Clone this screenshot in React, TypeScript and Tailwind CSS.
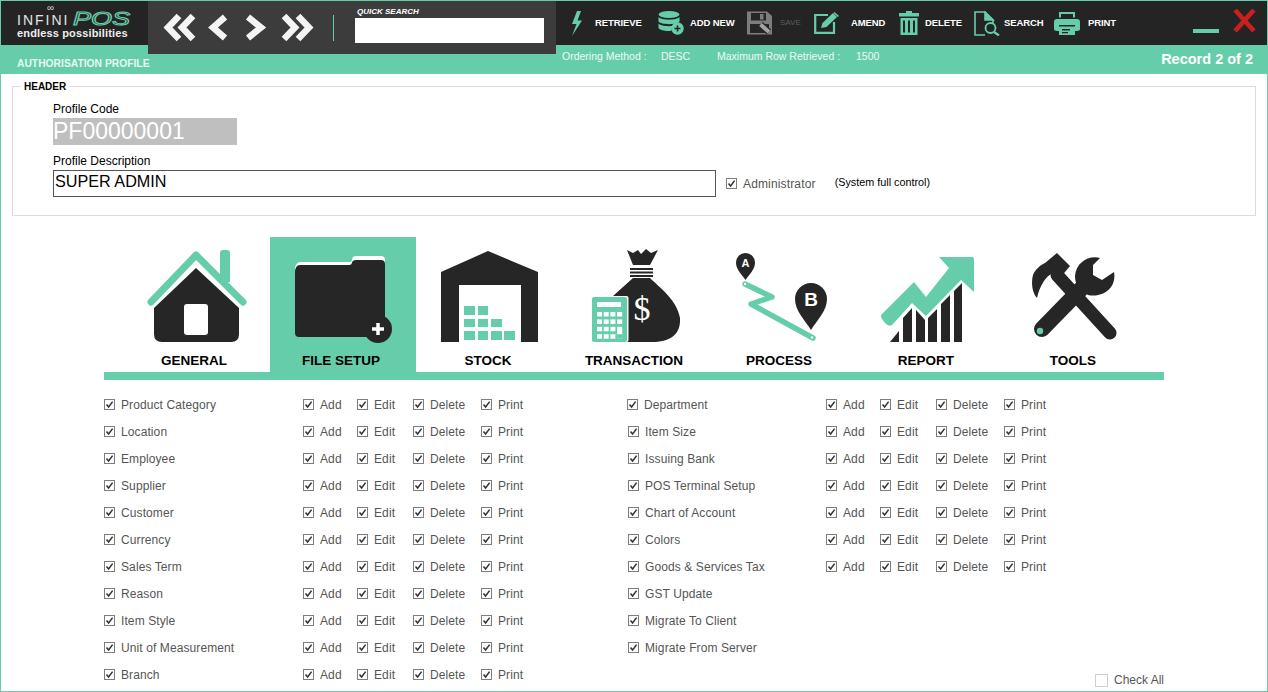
import type { ReactNode } from 'react'

const left = ['Product Category', 'Location', 'Employee', 'Supplier', 'Customer', 'Currency', 'Sales Term', 'Reason', 'Item Style', 'Unit of Measurement', 'Branch']
const right = ['Department', 'Item Size', 'Issuing Bank', 'POS Terminal Setup', 'Chart of Account', 'Colors', 'Goods & Services Tax', 'GST Update', 'Migrate To Client', 'Migrate From Server']
const noActions = ['GST Update', 'Migrate To Client', 'Migrate From Server']

function Tick() {
  return (
    <span className="flex h-[11px] w-[11px] shrink-0 items-center justify-center border border-[#7d7d7d] bg-white">
      <svg viewBox="0 0 9 9" className="h-[9px] w-[9px]">
        <path d="M1.5 4.5 L3.6 7 L7.6 1.6" fill="none" stroke="#333" strokeWidth="1.5" />
      </svg>
    </span>
  )
}

function Perm({ label, className }: { label: string; className: string }) {
  return (
    <div className={`flex items-center gap-[6px] ${className}`}>
      <Tick />
      <span className="whitespace-nowrap">{label}</span>
    </div>
  )
}

function PermRow({ name, actions = true, nudge = false }: { name: string; actions?: boolean; nudge?: boolean }) {
  return (
    <div className="flex h-[27px] items-center text-[12px] tracking-[0.1px] text-[#555]">
      <Perm label={name} className={nudge ? 'w-[199px] pl-[1px]' : 'w-[199px]'} />
      {actions ? (
        <>
          <Perm label="Add" className="w-[54px]" />
          <Perm label="Edit" className="w-[56px]" />
          <Perm label="Delete" className="w-[68px]" />
          <Perm label="Print" className="w-[60px]" />
        </>
      ) : null}
    </div>
  )
}

const teal = '#66cdaa'
const dark = '#262626'

function ToolItem({ icon, label, className, gap, muted }: { icon: ReactNode; label: string; className: string; gap: string; muted?: boolean }) {
  return (
    <div className={`flex items-center ${className}`}>
      {icon}
      {muted ? (
        <span className={`${gap} whitespace-nowrap text-[8px] text-[#5c5c5c]`}>{label}</span>
      ) : (
        <span className={`${gap} whitespace-nowrap text-[9.5px] font-bold tracking-[-0.1px] text-white`}>{label}</span>
      )}
    </div>
  )
}

const BoltIcon = (
  <svg viewBox="0 0 16 25" className="h-[25px] w-[16px]" fill={teal}>
    <path d="M8 0 L3 13 H7.5 L3 25 L13 9.5 H8.5 L12 0 Z" />
  </svg>
)

const DbIcon = (
  <svg viewBox="0 0 26 24" className="h-[24px] w-[26px]" fill={teal}>
    <ellipse cx="11" cy="3.5" rx="10.5" ry="3.5" />
    <path d="M0.5 6 C3 9.5 19 9.5 21.5 6 V10.5 C19 14 3 14 0.5 10.5 Z" />
    <path d="M0.5 12.5 C3 16 19 16 21.5 12.5 V14 A8 8 0 0 0 13 20 C7 20.5 2 19 0.5 17 Z" />
    <circle cx="19.5" cy="17.5" r="6.2" />
    <path d="M19.5 14.5 V20.5 M16.5 17.5 H22.5" stroke={dark} strokeWidth="1.6" />
  </svg>
)

const SaveIcon = (
  <svg viewBox="0 0 25 24" className="h-[24px] w-[25px]">
    <path d="M0 0.5 H20 L25 5 V23.5 H0 Z" fill="#7d7d7d" />
    <rect x="4" y="2" width="15" height="7.5" fill={dark} />
    <rect x="13" y="3" width="3.5" height="5.5" fill="#7d7d7d" />
    <rect x="3" y="13" width="19" height="9" fill={dark} />
    <path d="M13.5 13.5 L22 21" stroke={dark} strokeWidth="6.5" />
    <path d="M13.5 13.5 L22 21" stroke="#a4a4a4" strokeWidth="4" />
  </svg>
)

const AmendIcon = (
  <svg viewBox="0 0 26 22" className="h-[22px] w-[26px]">
    <path d="M14 3 H1.2 V20.8 H20 V10" fill="none" stroke={teal} strokeWidth="2.2" />
    <path d="M7 16 L8.5 11 L19 1 L23 5 L12.5 15 Z" fill={teal} />
    <path d="M20.5 0 L25 4 L23.8 5 L19.5 1 Z" fill={teal} />
  </svg>
)

const TrashIcon = (
  <svg viewBox="0 0 22 24" className="h-[24px] w-[22px]" fill={teal}>
    <path d="M8 0 H14 V2 H21 V5.5 H1 V2 H8 Z" />
    <path d="M2.5 7 H19.5 V24 H2.5 Z M5 9.5 V21.5 H7 V9.5 Z M10 9.5 V21.5 H12 V9.5 Z M15 9.5 V21.5 H17 V9.5 Z" fillRule="evenodd" />
  </svg>
)

const SearchDocIcon = (
  <svg viewBox="0 0 26 25" className="h-[25px] w-[26px]" fill="none" stroke={teal} strokeWidth="1.6">
    <path d="M11 24 H1 V1 H11 L19 9 V12" />
    <path d="M11 1 L19 9 H11 Z" fill={teal} />
    <circle cx="16.5" cy="17" r="5" strokeWidth="1.8" />
    <path d="M20 21 L25 24.5" strokeWidth="2.2" />
  </svg>
)

const PrintIcon = (
  <svg viewBox="0 0 26 23" className="h-[23px] w-[26px]" fill={teal}>
    <path d="M5 0 H21 V5.5 H19 V2 H7 V5.5 H5 Z" />
    <path d="M3 7 H23 Q26 7 26 10 V17 Q26 19 23 19 H21 V13 H5 V19 H3 Q0 19 0 17 V10 Q0 7 3 7 Z" />
    <path d="M5 14.5 H21 V23 H5 Z M8 17 V18.5 H16 V17 Z M8 20 V21.2 H14 V20 Z" fillRule="evenodd" />
  </svg>
)

const HomeTab = (
  <>
    <path d="M220 253 Q220 250 223 250 H227 Q230 250 230 253 V282 H220 Z" fill={teal} />
    <path d="M151 302 L196 255 L243 302" fill="none" stroke={teal} strokeWidth="7" strokeLinecap="round" strokeLinejoin="round" />
    <path d="M196 268 L239 308 V334 Q239 342 231 342 H162 Q154 342 154 334 V308 Z" fill={dark} />
    <rect x="184" y="304" width="24" height="31" rx="3" fill="#fff" />
  </>
)

const FolderTab = (
  <>
    <path d="M295 269 Q295 263 300 262 H350 Q352 262 352 259 Q353 256 356 256 H381 Q385 256 385 260 V270 H295 Z" fill="#fff" />
    <path d="M295 273 Q295 265 300 265 H349 Q352 265 352 262 Q353 260 356 260 H381 Q385 260 385 264 V333 Q385 337 381 337 H299 Q295 337 295 333 Z" fill={dark} />
    <circle cx="378" cy="329" r="14" fill={dark} />
    <path d="M378 323 V335 M372 329 H384" stroke="#fff" strokeWidth="3.5" />
  </>
)

const StockTab = (
  <>
    <path d="M488 251 L538 272 V342 H521 V285 H459 V342 H441 V272 Z" fill={dark} />
    <g fill={teal}>
      <rect x="464" y="306" width="11" height="9" />
      <rect x="478" y="306" width="10" height="9" />
      <rect x="464" y="319" width="11" height="8" />
      <rect x="478" y="319" width="10" height="8" />
      <rect x="491" y="319" width="11" height="8" />
      <rect x="464" y="331" width="11" height="9" />
      <rect x="478" y="331" width="10" height="9" />
      <rect x="491" y="331" width="11" height="9" />
      <rect x="504" y="331" width="11" height="9" />
    </g>
  </>
)

const calcCells = [0, 1, 2, 3].flatMap((r) => [0, 1, 2, 3].map((c) => ({ r, c })))

const TransactionTab = (
  <>
    <path d="M627 250 L633 253 L638 250 L641 254 L646 249 L651 253 L658 250 L650 265 H633 Z" fill={dark} />
    <rect x="630" y="268" width="23" height="2" fill={dark} />
    <rect x="630" y="271.5" width="23" height="2" fill={dark} />
    <rect x="630" y="275" width="23" height="2" fill={dark} />
    <path d="M633 278 H650 C660 288 677 300 680 318 C681 333 672 341 655 342 H620 V296 H613 Z" fill={dark} />
    <rect x="590.5" y="296" width="38" height="46" rx="2" fill="#fff" />
    <rect x="592" y="297" width="35" height="45" rx="2" fill={teal} />
    <rect x="597" y="302" width="24" height="5" rx="1" fill="#fff" />
    {calcCells.map(({ r, c }) => (
      <rect key={`${r}-${c}`} x={597 + c * 6.7} y={312 + r * 7.4} width="5" height={c === 3 && r === 2 ? 11.9 : 4.5} fill={c === 3 && r === 3 ? teal : '#fff'} />
    ))}
    <text x="642" y="320" fontFamily="'Liberation Serif', serif" fontSize="34" fill="#fff" textAnchor="middle">$</text>
  </>
)

const ProcessTab = (
  <>
    <path d="M745.5 253 A9.5 9.5 0 0 1 755 263 C755 269 749 275 745.5 280 C742 275 736 269 736 263 A9.5 9.5 0 0 1 745.5 253 Z" fill={dark} />
    <text x="745.5" y="267" fontFamily="'Liberation Sans', sans-serif" fontSize="11" fontWeight="700" fill="#fff" textAnchor="middle">A</text>
    <path d="M745 284 L772 297 L751 304 L813 338" fill="none" stroke={teal} strokeWidth="5.5" strokeLinecap="round" strokeLinejoin="round" />
    <circle cx="745" cy="284" r="1.2" fill="#fff" />
    <circle cx="812" cy="337.5" r="1.2" fill="#fff" />
    <path d="M811 283 A16 16 0 0 1 827 299 C827 311 817 320 811 330 C805 320 795 311 795 299 A16 16 0 0 1 811 283 Z" fill={dark} />
    <text x="811" y="306" fontFamily="'Liberation Sans', sans-serif" fontSize="19" fontWeight="700" fill="#fff" textAnchor="middle">B</text>
  </>
)

const ReportTab = (
  <>
    <path d="M890 342 L899 331 V342 Z M903 342 V318 L912 308 V342 Z M916 342 V310 L925 320 V342 Z M928 342 V318 L937 309 V342 Z M941 342 V304 L950 295 V342 Z M954 342 V291 L962 283 V342 Z" fill={dark} />
    <path d="M939 257 H972 Q974 257 974 259 V292 L961 280 L926 316 L912 303 L892 325 Q889 327 885 323 L882 319 Q880 316 882 314 L914 282 L926 297 L949 268 Z" fill={teal} />
  </>
)

const ToolsTab = (
  <>
    <path d="M1042 329 L1082 288" stroke={dark} strokeWidth="16" strokeLinecap="round" />
    <path d="M1110 333 L1057 275" stroke={dark} strokeWidth="13" strokeLinecap="round" />
    <path d="M1057 253 L1070 266 L1060 278 L1053 273 C1046 276 1040 285 1037 298 C1032 293 1031 282 1033 275 C1036 268 1041 265 1045 263 Z" fill={dark} />
    <path d="M1100 258 C1088 255 1076 263 1075 276 C1075 280 1076 284 1078 287 L1088 295 C1096 297 1106 294 1111 287 C1114 283 1115 277 1114 272 L1102 280 L1093 275 L1093 265 Z" fill={dark} />
    <circle cx="1040" cy="331" r="3.2" fill={teal} />
  </>
)

const tabs = [
  { label: 'GENERAL', w: 146, box: 'w-[146px] mr-[3px]', labelCls: '', art: HomeTab, viewBox: '121 237 146 110' },
  { label: 'FILE SETUP', w: 146, box: 'w-[146px] bg-[#66cdaa]', labelCls: 'pr-1', art: FolderTab, viewBox: '270 237 146 110' },
  { label: 'STOCK', w: 144, box: 'w-[144px]', labelCls: '', art: StockTab, viewBox: '416 237 144 110' },
  { label: 'TRANSACTION', w: 148, box: 'w-[148px]', labelCls: '', art: TransactionTab, viewBox: '560 237 148 110' },
  { label: 'PROCESS', w: 142, box: 'w-[142px]', labelCls: '', art: ProcessTab, viewBox: '708 237 142 110' },
  { label: 'REPORT', w: 152, box: 'w-[152px]', labelCls: '', art: ReportTab, viewBox: '850 237 152 110' },
  { label: 'TOOLS', w: 142, box: 'w-[142px]', labelCls: '', art: ToolsTab, viewBox: '1002 237 142 110' },
]

export default function App() {
  return (
    <div className="h-[692px] w-[1268px] overflow-hidden border border-[#66cdaa] bg-white font-['Liberation_Sans',Arial,sans-serif]">
      <header className="h-[73px] bg-[#66cdaa]">
        <div className="flex h-[44px] items-start bg-[#242424]">
          <div className="relative h-[44px] w-[147px] shrink-0 pl-[16px] pt-[9px] text-white">
            <div className="flex h-[18px] items-baseline">
              <span className="w-[56px] text-[14px] leading-[14px] tracking-[2px] text-[#e4e4e4]">INFINI</span>
              <span className="inline-block w-[59px] origin-left scale-x-[1.5] whitespace-nowrap text-[18px] italic leading-[18px] text-transparent [-webkit-text-stroke:1px_#66cdaa]">POS</span>
            </div>
            <div className="mt-[-1px] text-[11px] font-bold leading-[12px] tracking-[0.15px] text-[#eee]">endless possibilities</div>
            <span className="absolute left-[46px] top-[3px] h-[7px] text-[10px] leading-[7px] text-[#ccc]">∞</span>
          </div>

          <div className="relative z-10 flex h-[53px] w-[408px] shrink-0 items-start bg-[#3c3c3c]">
            <svg viewBox="148 1 190 53" className="h-[53px] w-[190px] shrink-0" fill="none" stroke="#f4f4f4" strokeWidth="6.5">
              <path d="M179 16 L168 27.5 L179 39 M193 16 L182 27.5 L193 39" />
              <path d="M225 17 L213 27.5 L225 38" />
              <path d="M248 17 L261 27.5 L248 38" />
              <path d="M284 16 L295 27.5 L284 39 M298 16 L309 27.5 L298 39" />
            </svg>
            <div className="ml-[-5px] mt-[14px] h-[26px] w-px bg-[#66cdaa]" />
            <div className="ml-[21px] w-[189px] shrink-0">
              <div className="h-[17px] pl-[2px] pt-[6px] text-[8px] font-bold italic leading-[9px] text-white">QUICK SEARCH</div>
              <div className="h-[25px] bg-white" />
            </div>
          </div>

          <div className="flex h-[44px] flex-1 items-center pl-[13px]">
            <ToolItem className="w-[89px]" gap="ml-[10px]" icon={BoltIcon} label="RETRIEVE" />
            <ToolItem className="w-[89px]" gap="ml-[6px]" icon={DbIcon} label="ADD NEW" />
            <ToolItem className="w-[67px]" gap="ml-[8px]" icon={SaveIcon} label="SAVE" muted />
            <ToolItem className="w-[84px]" gap="ml-[11px]" icon={AmendIcon} label="AMEND" />
            <ToolItem className="w-[76px]" gap="ml-[5px]" icon={TrashIcon} label="DELETE" />
            <ToolItem className="w-[80px]" gap="ml-[4px]" icon={SearchDocIcon} label="SEARCH" />
            <ToolItem className="w-[62px]" gap="ml-[8px]" icon={PrintIcon} label="PRINT" />
            <div className="ml-auto mr-[14px] mt-[16px] h-[4px] w-[26px] bg-[#66cdaa]" />
            <svg viewBox="0 0 22 22" className="mb-[6px] mr-[11px] h-[23px] w-[23px]">
              <path d="M2 1 L20 21 M20 1 L2 21" stroke="#c8201f" strokeWidth="4.5" />
            </svg>
          </div>
        </div>

        <div className="flex h-[29px] text-white">
          <div className="w-[561px] shrink-0 pl-[16px] pt-[13px] text-[10.3px] font-bold leading-[12px] text-[#e6f8f1]">AUTHORISATION PROFILE</div>
          <div className="flex pt-[5px] text-[10.5px] leading-[12px] text-[#eefaf6]">
            <span className="w-[99px] whitespace-nowrap">Ordering Method :</span>
            <span className="w-[56px]">DESC</span>
            <span className="w-[139px] whitespace-nowrap">Maximum Row Retrieved :</span>
            <span>1500</span>
          </div>
          <div className="ml-auto pr-[14px] pt-[7px] text-[14.5px] font-bold leading-[15px]">Record 2 of 2</div>
        </div>
      </header>

      <section className="relative mx-[11px] mt-[12px] h-[130px] border border-[#dcdcdc] pl-[40px] pt-[15px] text-[12px] leading-[14px] text-black">
        <span className="absolute left-[8px] top-[-6px] bg-white px-[3px] text-[10px] font-bold leading-[12px]">HEADER</span>
        <div>Profile Code</div>
        <div className="mt-[2px] flex h-[27px] w-[184px] items-center bg-[#bfbfbf] pb-[1px] text-[23px] text-white">PF00000001</div>
        <div className="mt-[9px]">Profile Description</div>
        <div className="mt-[2px] flex items-center">
          <div className="flex h-[27px] w-[663px] items-center border border-[#555] pb-[5px] pl-[1px] text-[16.2px] text-black">SUPER ADMIN</div>
          <div className="ml-[10px] flex items-center gap-[6px] text-[#555] tracking-[0.15px]">
            <Tick />
            <span>Administrator</span>
          </div>
          <span className="mb-[3px] ml-[19px] text-[10.8px] text-black">(System full control)</span>
        </div>
      </section>

      <nav className="ml-[120px] mt-[21px] flex h-[135px]">
        {tabs.map((t) => (
          <div key={t.label} className={`flex shrink-0 flex-col items-center ${t.box}`}>
            <svg viewBox={t.viewBox} width={t.w} height={110} className="shrink-0">
              {t.art}
            </svg>
            <div className={`h-[25px] text-[13.5px] font-bold leading-[27px] text-black ${t.labelCls}`}>{t.label}</div>
          </div>
        ))}
      </nav>
      <div className="ml-[103px] h-[8px] w-[1060px] bg-[#66cdaa]" />

      <main className="ml-[103px] mt-[11px] flex w-[1060px]">
        <div className="w-[523px] shrink-0">
          {left.map((n) => (
            <PermRow key={n} name={n} />
          ))}
        </div>
        <div>
          {right.map((n, i) => (
            <PermRow key={n} name={n} nudge={i > 0} actions={!noActions.includes(n)} />
          ))}
        </div>
        <div className="ml-auto flex h-[16px] items-center gap-[6px] self-end text-[12px] text-[#555]">
          <span className="h-[13px] w-[13px] border border-[#cfcfcf] bg-white" />
          <span>Check All</span>
        </div>
      </main>
    </div>
  )
}
